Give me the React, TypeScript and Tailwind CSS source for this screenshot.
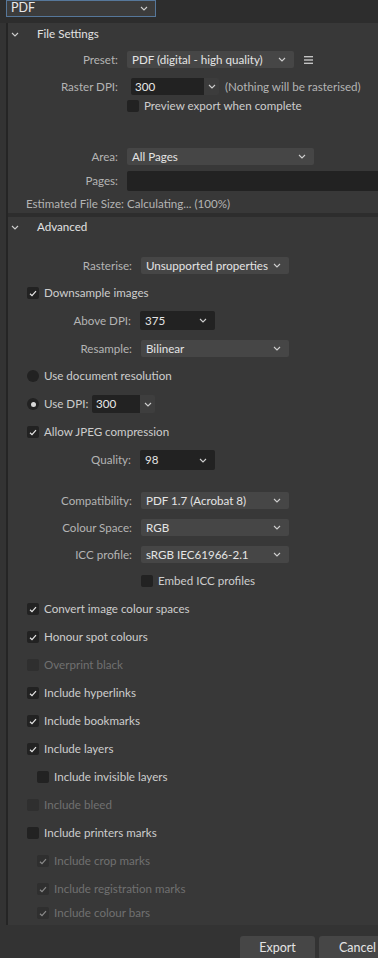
import React from 'react';

const font = { fontFamily: 'Lato, "Noto Sans", sans-serif' };

function Chevron({ className = '' }: { className?: string }) {
  return (
    <svg width="8" height="5" viewBox="0 0 8 5" className={`shrink-0 ${className}`}>
      <path d="M1 1 L4 4 L7 1" fill="none" stroke="#cfcfcf" strokeWidth="1.1" />
    </svg>
  );
}

function Check({ dim = false }: { dim?: boolean }) {
  return (
    <svg width="8" height="7" viewBox="0 0 8 7">
      <path d="M1 3.8 L3 5.6 L7 1.2" fill="none" stroke={dim ? '#8a8a8a' : '#e8e8e8'} strokeWidth="1.2" />
    </svg>
  );
}

function Select({ value, w, dark = false, h = 'h-[17px]' }: { value: string; w: string; dark?: boolean; h?: string }) {
  return (
    <div
      className={`${w} ${h} ${dark ? 'bg-[#222222]' : 'bg-[#464646]'} rounded-[2px] flex items-center justify-between pl-[5px] pr-[8px] text-[#e4e4e4] whitespace-nowrap shrink-0`}
    >
      <span>{value}</span>
      <Chevron />
    </div>
  );
}

function Field({ label, lw, children, h = 'h-[17px]', mt }: { label: string; lw: string; children: React.ReactNode; h?: string; mt: string }) {
  return (
    <div className={`flex items-center ${h} ${mt}`}>
      <div className={`${lw} text-right pr-[9px] text-[#b4b4b4] shrink-0 whitespace-nowrap`}>{label}</div>
      {children}
    </div>
  );
}

function CheckRow({ label, checked = false, disabled = false, indent = false, h = 'h-[28px]' }: { label: string; checked?: boolean; disabled?: boolean; indent?: boolean; h?: string }) {
  return (
    <div className={`flex items-center ${h} ${indent ? 'pl-[29px]' : 'pl-[19px]'}`}>
      <div
        className={`w-[12px] h-[12px] rounded-[2px] flex items-center justify-center shrink-0 ${disabled ? 'bg-[#2f2f2f]' : 'bg-[#222222]'}`}
      >
        {checked && <Check dim={disabled} />}
      </div>
      <span className={`ml-[5px] whitespace-nowrap ${disabled ? 'text-[#707070]' : 'text-[#cdcdcd]'}`}>{label}</span>
    </div>
  );
}

function SectionHeader({ title, h }: { title: string; h: string }) {
  return (
    <div className={`flex items-center ${h}`}>
      <div className="w-[29px] pl-[3px] flex items-center">
        <Chevron />
      </div>
      <span className="text-[#e2e2e2]">{title}</span>
    </div>
  );
}

export default function App() {
  return (
    <div className="w-[378px] h-[958px] bg-[#333333] overflow-hidden text-[11.6px] leading-none relative" style={font}>
      {/* format picker */}
      <div className="h-[23px] bg-[#2d2d2d] pl-[6px]">
        <div className="w-[150px] h-[17px] bg-[#3c3c3c] border border-[#56779a] flex items-center justify-between pl-[4px] pr-[7px] text-[#e8e8e8]">
          <span className="text-[12.5px]">PDF</span>
          <Chevron />
        </div>
      </div>

      <div className="ml-[6px] border-l-2 border-[#252525] bg-[#2d2d2d]">
        {/* File Settings */}
        <div className="bg-[#383838] pb-[1px]">
          <SectionHeader title="File Settings" h="h-[22px]" />
          <Field label="Preset:" lw="w-[119px]" mt="mt-[6px]">
            <Select value="PDF (digital - high quality)" w="w-[167px]" />
            <svg width="9" height="8" viewBox="0 0 9 8" className="ml-[10px]">
              <rect x="0" y="0" width="9" height="1.4" fill="#c4c4c4" />
              <rect x="0" y="3.3" width="9" height="1.4" fill="#c4c4c4" />
              <rect x="0" y="6.6" width="9" height="1.4" fill="#c4c4c4" />
            </svg>
          </Field>
          <Field label="Raster DPI:" lw="w-[119px]" mt="mt-[10px]">
            <div className="flex h-[17px] ml-[4px] shrink-0">
              <div className="w-[73px] bg-[#222222] flex items-center pl-[4px] text-[#e8e8e8] rounded-l-[2px]">300</div>
              <div className="w-[15px] bg-[#3c3c3c] flex items-center justify-center rounded-r-[2px]">
                <Chevron />
              </div>
            </div>
            <span className="ml-[6px] text-[#b4b4b4] whitespace-nowrap">(Nothing will be rasterised)</span>
          </Field>
          <div className="flex items-center h-[12px] mt-[5px] pl-[119px]">
            <div className="w-[12px] h-[12px] rounded-[2px] bg-[#222222]" />
            <span className="ml-[5px] text-[#cdcdcd]">Preview export when complete</span>
          </div>
          <Field label="Area:" lw="w-[119px]" mt="mt-[36px]">
            <Select value="All Pages" w="w-[187px]" />
          </Field>
          <Field label="Pages:" lw="w-[119px]" mt="mt-[6px]" h="h-[20px]">
            <div className="flex-1 h-[20px] bg-[#222222] rounded-l-[2px]" />
          </Field>
          <div className="h-[16px] mt-[5px] pl-[18px] flex items-center text-[#b4b4b4]">
            Estimated File Size: Calculating... (100%)
          </div>
        </div>

        <div className="h-[4px]" />

        {/* Advanced */}
        <div className="bg-[#383838] pb-[2px]">
          <SectionHeader title="Advanced" h="h-[20px]" />
          <Field label="Rasterise:" lw="w-[133px]" mt="mt-[20px]">
            <Select value="Unsupported properties" w="w-[148px]" />
          </Field>
          <div className="mt-[13px]">
            <CheckRow label="Downsample images" checked h="h-[12px]" />
          </div>
          <Field label="Above DPI:" lw="w-[132px]" mt="mt-[12px]" h="h-[19px]">
            <Select value="375" w="w-[75px]" dark h="h-[19px]" />
          </Field>
          <Field label="Resample:" lw="w-[133px]" mt="mt-[10px]">
            <Select value="Bilinear" w="w-[148px]" />
          </Field>
          <div className="flex items-center h-[12px] mt-[13px] pl-[19px]">
            <div className="w-[12px] h-[12px] rounded-full bg-[#222222]" />
            <span className="ml-[5px] text-[#cdcdcd]">Use document resolution</span>
          </div>
          <div className="flex items-center h-[18px] mt-[13px] pl-[19px]">
            <div className="w-[12px] h-[12px] rounded-full bg-[#222222] flex items-center justify-center shrink-0">
              <div className="w-[5px] h-[5px] rounded-full bg-[#d8d8d8]" />
            </div>
            <span className="ml-[5px] w-[48px] text-[#cdcdcd] whitespace-nowrap shrink-0">Use DPI:</span>
            <div className="flex h-[18px] shrink-0">
              <div className="w-[48px] bg-[#222222] flex items-center pl-[4px] text-[#e8e8e8] rounded-l-[2px]">300</div>
              <div className="w-[15px] bg-[#3e3e3e] flex items-center justify-center rounded-r-[2px]">
                <Chevron />
              </div>
            </div>
          </div>
          <div className="mt-[13px]">
            <CheckRow label="Allow JPEG compression" checked h="h-[12px]" />
          </div>
          <Field label="Quality:" lw="w-[132px]" mt="mt-[12px]" h="h-[20px]">
            <Select value="98" w="w-[75px]" dark h="h-[20px]" />
          </Field>
          <Field label="Compatibility:" lw="w-[133px]" mt="mt-[22px]">
            <Select value="PDF 1.7 (Acrobat 8)" w="w-[148px]" />
          </Field>
          <Field label="Colour Space:" lw="w-[133px]" mt="mt-[10px]">
            <Select value="RGB" w="w-[148px]" />
          </Field>
          <Field label="ICC profile:" lw="w-[133px]" mt="mt-[10px]">
            <Select value="sRGB IEC61966-2.1" w="w-[148px]" />
          </Field>
          <div className="flex items-center h-[28px] mt-[4px] pl-[133px]">
            <div className="w-[12px] h-[12px] rounded-[2px] bg-[#222222]" />
            <span className="ml-[5px] text-[#cdcdcd]">Embed ICC profiles</span>
          </div>
          <CheckRow label="Convert image colour spaces" checked />
          <CheckRow label="Honour spot colours" checked />
          <CheckRow label="Overprint black" disabled />
          <CheckRow label="Include hyperlinks" checked />
          <CheckRow label="Include bookmarks" checked />
          <CheckRow label="Include layers" checked />
          <CheckRow label="Include invisible layers" indent />
          <CheckRow label="Include bleed" disabled />
          <CheckRow label="Include printers marks" />
          <CheckRow label="Include crop marks" checked disabled indent />
          <CheckRow label="Include registration marks" checked disabled indent />
          <CheckRow label="Include colour bars" checked disabled indent h="h-[20px]" />
        </div>
      </div>

      {/* buttons */}
      <div className="flex justify-end gap-[4px] mt-[11px]">
        <div className="w-[75px] h-[24px] bg-[#464646] rounded-t-[3px] flex items-center justify-center text-[#e4e4e4] text-[12.5px]">
          Export
        </div>
        <div className="w-[59px] h-[24px] bg-[#464646] rounded-tl-[3px] flex items-center text-[#e4e4e4] text-[12.5px]">
          <span className="pl-[20px]">Cancel</span>
        </div>
      </div>
    </div>
  );
}
